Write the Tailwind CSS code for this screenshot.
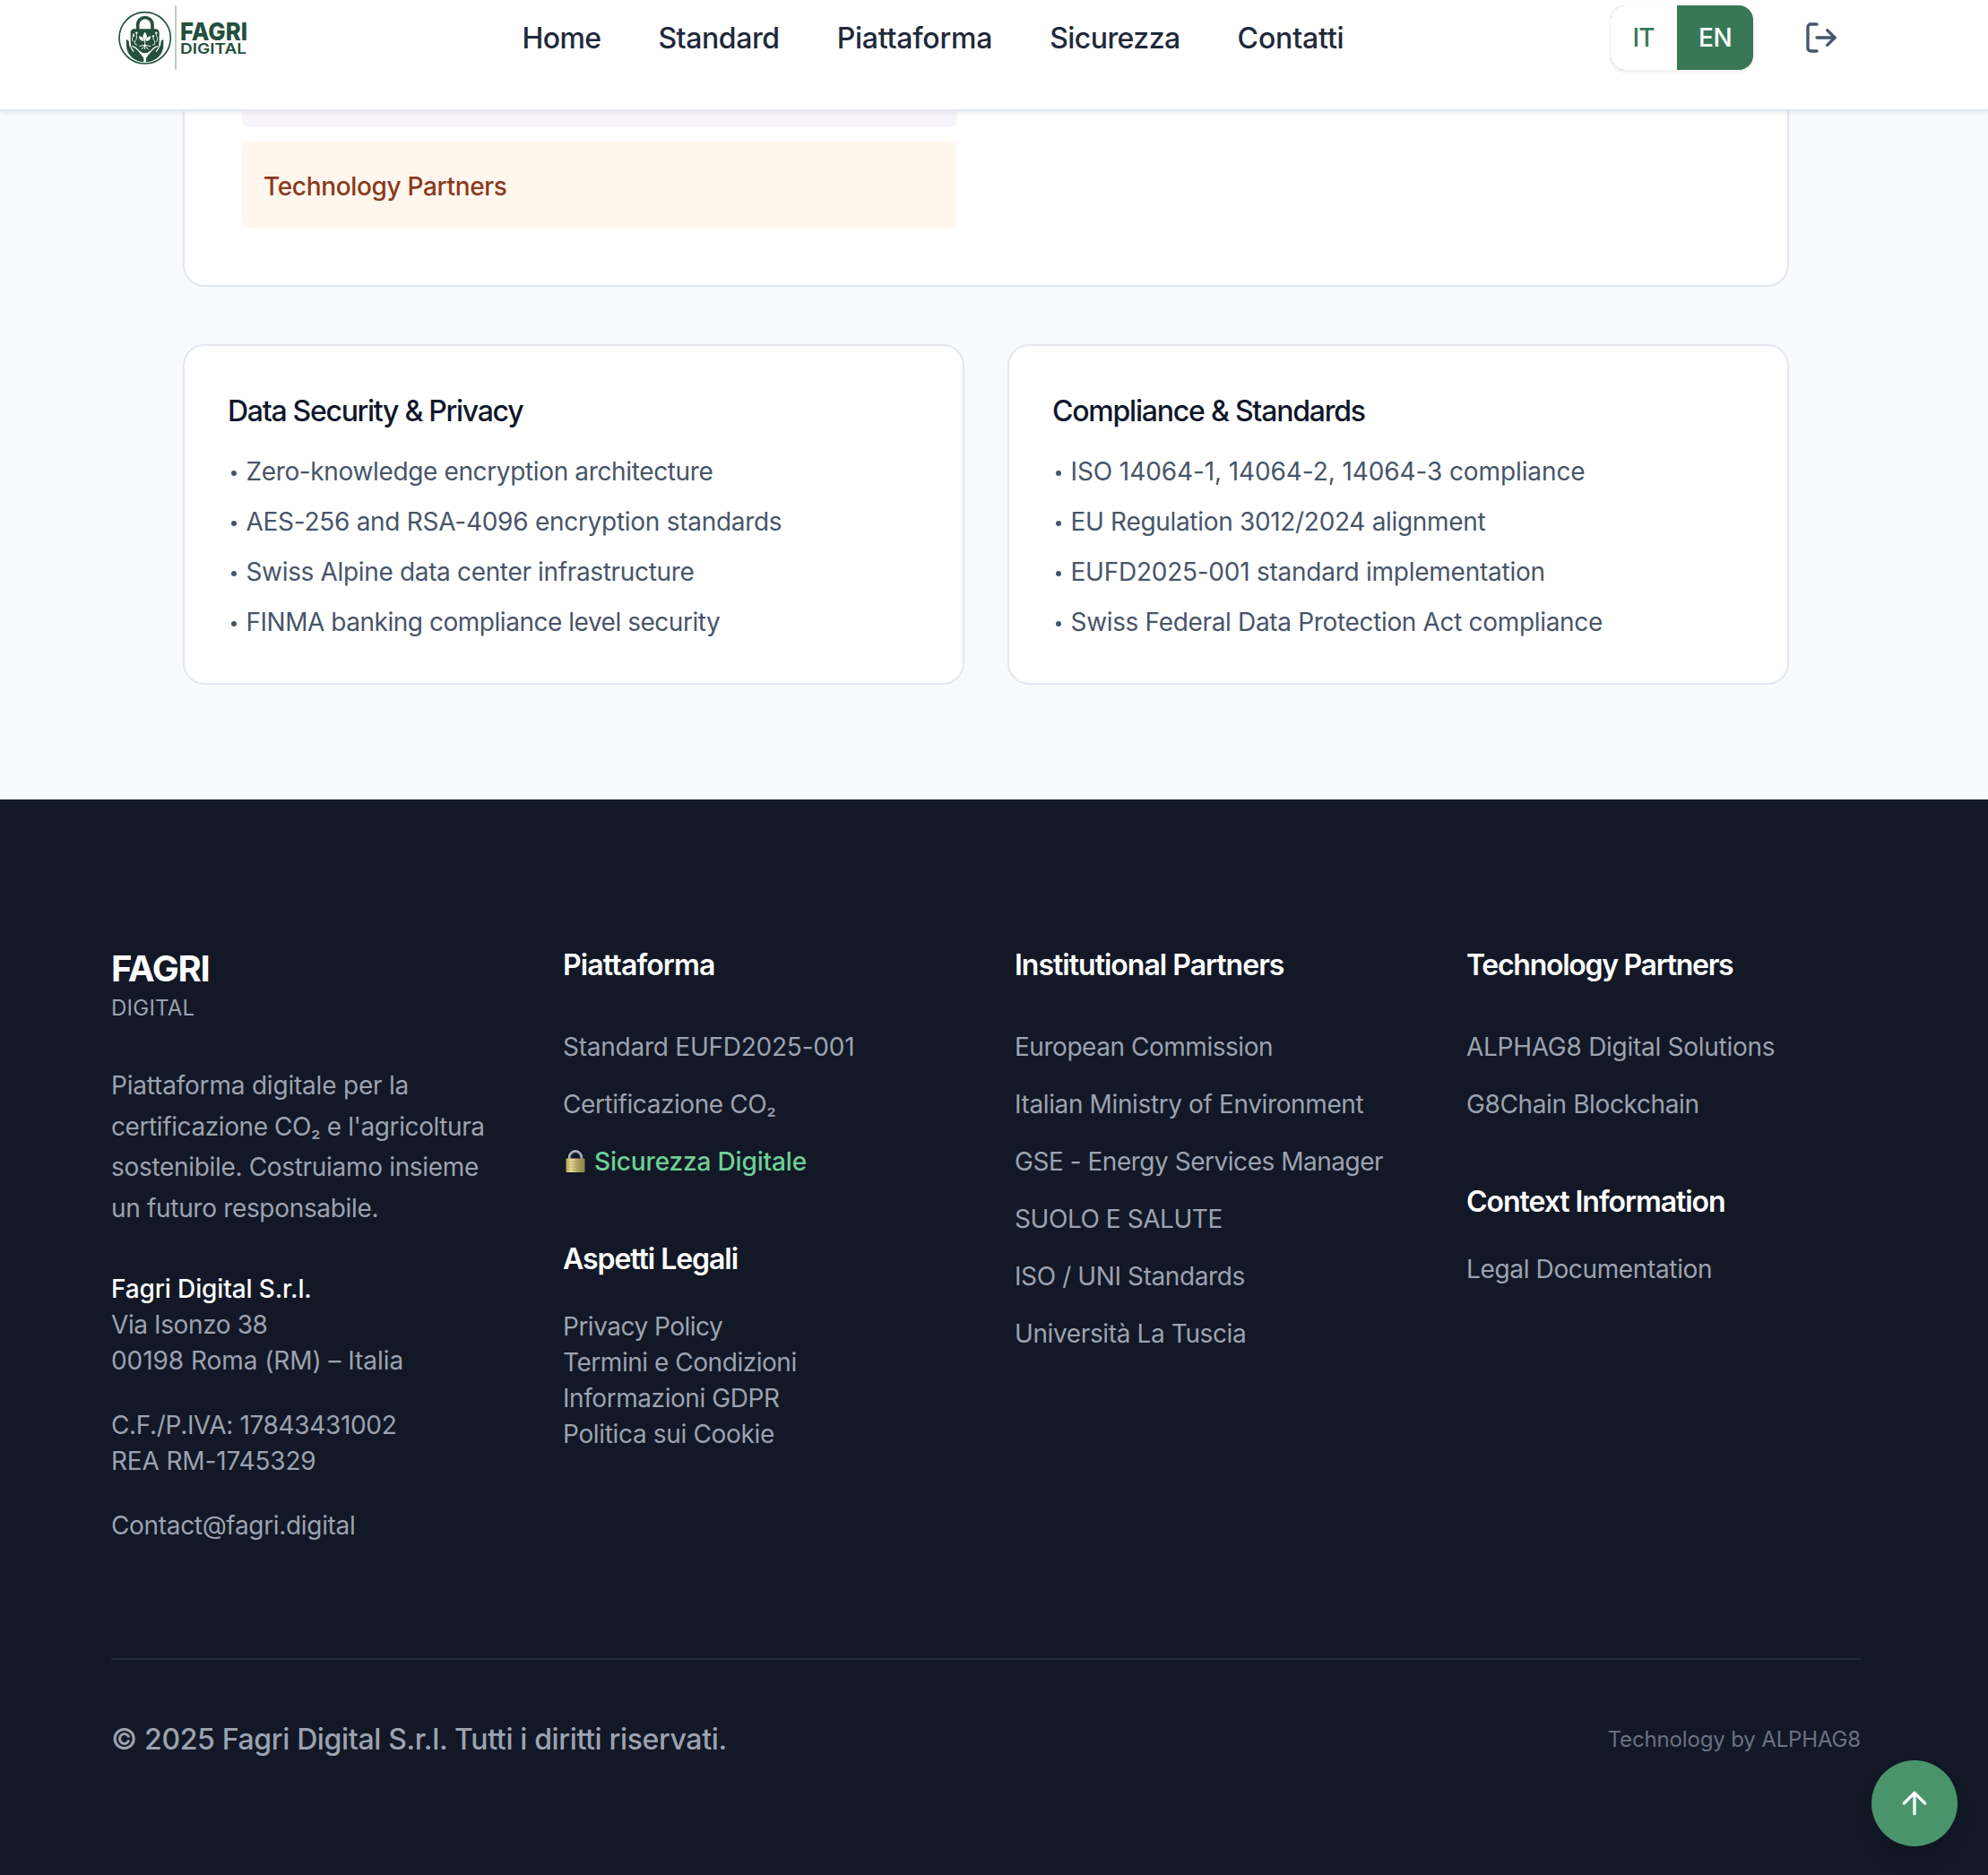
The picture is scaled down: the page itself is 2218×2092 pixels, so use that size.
<!DOCTYPE html>
<html lang="it">
<head>
<meta charset="utf-8">
<meta name="viewport" content="width=device-width, initial-scale=1">
<title>Fagri Digital</title>
<script src="https://cdn.jsdelivr.net/npm/@tailwindcss/browser@4"></script>
</head>
<body class="h-[2092px] overflow-hidden bg-[#f9fafc] font-['Inter',sans-serif] text-[28px] leading-10">
<div class="flex h-[2092px] flex-col">

  <!-- Header -->
  <header class="relative z-10 h-[124px] shrink-0 border-b-2 border-[#e2e7ef] bg-white pt-1.5 shadow-[0_2px_6px_rgba(0,0,0,0.08)]">
    <div class="flex h-[72px] items-center pl-[132px]">
      <a href="#" class="flex h-[72px] w-[146px] items-center">
        <svg class="size-[60px] shrink-0" viewBox="66 36 180 180" fill="none">
          <circle cx="155" cy="127" r="86" stroke="#24503c" stroke-width="5"/>
          <path d="M131 102V83a24.500 24.500 0 0 1 49 0v19" stroke="#24503c" stroke-width="11"/>
          <path d="M120 97h70q13 0 13 13v28q0 34-48 40q-48-6-48-40v-28q0-13 13-13z" fill="#24503c"/>
          <path d="M93 133q9 0 9 12l1 10l5-4q7-1 12 6l23 27q10 9 12 24q-24 1-44-16q-18-17-18-40zM217 133q-9 0-9 12l-1 10l-5-4q-7-1-12 6l-23 27q-10 9-12 24q24 1 44-16q18-17 18-40z" fill="#24503c"/>
          <path d="M106 152q3 12 12 21M204 152q-3 12-12 21M112 154q13 4 22 16q17 10 21 24M198 154q-13 4-22 16q-17 10-21 24" stroke="#fff" stroke-width="3.500"/>
          <path d="M155 185v22" stroke="#fff" stroke-width="8"/>
          <path d="M155 107q-13 14 0 29q13-15 0-29zM135 121q1 17 17 17q-1-16-17-17zM175 121q-1 17-17 17q1-16 17-17z" fill="#fff"/>
          <path d="M155 132v33M155 151q-8 1-19 4M155 151q8 1 19 4M155 153q-6 4-11 12M155 153q6 4 11 12" stroke="#fff" stroke-width="3"/>
          <path d="M117 111v9l-4 5v10l4 5M127 109v22l-5 5v12l8 3M193 111v9l4 5v10l-4 5M183 117v15l5 5v11l-8 3" stroke="#fff" stroke-width="2.500"/>
          <g fill="#fff"><circle cx="117" cy="119" r="3.500"/><circle cx="127" cy="110" r="3.500"/><circle cx="193" cy="110" r="3.500"/><circle cx="183" cy="121" r="3.500"/></g>
        </svg>
        <span class="ml-[3px] h-[72px] w-[2px] shrink-0 bg-[#bccec5]"></span>
        <svg class="ml-1 h-[72px] w-[77px] shrink-0 overflow-visible font-['Inter',sans-serif]" viewBox="0 0 77 72" fill="#24503c">
          <text x="0" y="38.700" font-size="27.500" font-weight="800" textLength="75" lengthAdjust="spacingAndGlyphs">FAGRI</text>
          <text x="0" y="53.800" font-size="16.500" font-weight="600" textLength="74" lengthAdjust="spacingAndGlyphs">DIGITAL</text>
        </svg>
      </a>
      <nav class="ml-[304.500px] flex shrink-0 gap-16 pt-0.5 text-[32px] leading-[48px] font-medium text-[#1e293b]">
        <a href="#" class="tracking-[-0.626px]">Home</a>
        <a href="#" class="tracking-[-0.423px]">Standard</a>
        <a href="#" class="tracking-[-0.220px]">Piattaforma</a>
        <a href="#" class="tracking-[-0.560px]">Sicurezza</a>
        <a href="#" class="tracking-[-0.165px]">Contatti</a>
      </nav>
      <div class="mr-[166px] ml-auto flex items-center">
        <div class="flex h-[72px] w-[159px] overflow-hidden rounded-2xl bg-[#387857] font-medium shadow-[0_2px_4px_rgba(0,0,0,0.08)]">
          <button class="w-[74px] bg-white pl-[24.500px] text-left tracking-[-0.900px] text-[#387857]">IT</button>
          <button class="w-[85px] pl-6 text-left tracking-[-0.385px] text-white">EN</button>
        </div>
        <svg class="ml-14 size-10" viewBox="0 0 24 24" fill="none" stroke="#475569" stroke-width="2" stroke-linecap="round" stroke-linejoin="round">
          <path d="M9 21H5a2 2 0 0 1-2-2V5a2 2 0 0 1 2-2h4"/><path d="m16 17 5-5-5-5"/><path d="M21 12H9"/>
        </svg>
      </div>
    </div>
  </header>

  <!-- Content -->
  <main class="flex h-[768px] shrink-0 flex-col gap-16 pr-[222px] pl-[204px]">
    <section class="h-[196px] rounded-b-3xl border-2 border-t-0 border-[#e2e7ef] bg-white px-16">
      <div class="h-[18px] w-[798px] rounded-b-lg bg-[#f7f4fe]"></div>
      <div class="mt-4 flex h-24 w-[798px] items-center rounded-lg bg-[#fff7ed] pt-1 pl-6 font-medium tracking-[-0.338px] text-[#8a3a1c]">Technology Partners</div>
    </section>
    <div class="grid grid-cols-2 gap-12">
      <section class="h-[380px] rounded-3xl border-2 border-[#e2e7ef] bg-white p-12">
        <h3 class="text-[32px] leading-[50px] font-medium tracking-[-1.290px] text-[#0f172a]">Data Security &amp; Privacy</h3>
        <ul class="mt-[22px] flex flex-col gap-4 whitespace-nowrap text-[#475569]">
          <li class="flex items-center"><span class="mt-1 mr-[11px] ml-[3.500px] size-1.5 rounded-full bg-[#475569]"></span><span class="tracking-[-0.362px]">Zero-knowledge encryption architecture</span></li>
          <li class="flex items-center"><span class="mt-1 mr-[11px] ml-[3.500px] size-1.5 rounded-full bg-[#475569]"></span><span class="tracking-[-0.280px]">AES-256 and RSA-4096 encryption standards</span></li>
          <li class="flex items-center"><span class="mt-1 mr-[11px] ml-[3.500px] size-1.5 rounded-full bg-[#475569]"></span><span class="tracking-[-0.340px]">Swiss Alpine data center infrastructure</span></li>
          <li class="flex items-center"><span class="mt-1 mr-[11px] ml-[3.500px] size-1.5 rounded-full bg-[#475569]"></span><span class="tracking-[-0.471px]">FINMA banking compliance level security</span></li>
        </ul>
      </section>
      <section class="h-[380px] rounded-3xl border-2 border-[#e2e7ef] bg-white p-12">
        <h3 class="text-[32px] leading-[50px] font-medium tracking-[-1.220px] text-[#0f172a]">Compliance &amp; Standards</h3>
        <ul class="mt-[22px] flex flex-col gap-4 whitespace-nowrap text-[#475569]">
          <li class="flex items-center"><span class="mt-1 mr-[11px] ml-[3.500px] size-1.5 rounded-full bg-[#475569]"></span><span class="tracking-[-0.100px]">ISO 14064-1, 14064-2, 14064-3 compliance</span></li>
          <li class="flex items-center"><span class="mt-1 mr-[11px] ml-[3.500px] size-1.5 rounded-full bg-[#475569]"></span><span class="tracking-[-0.316px]">EU Regulation 3012/2024 alignment</span></li>
          <li class="flex items-center"><span class="mt-1 mr-[11px] ml-[3.500px] size-1.5 rounded-full bg-[#475569]"></span><span class="tracking-[-0.250px]">EUFD2025-001 standard implementation</span></li>
          <li class="flex items-center"><span class="mt-1 mr-[11px] ml-[3.500px] size-1.5 rounded-full bg-[#475569]"></span><span class="tracking-[-0.335px]">Swiss Federal Data Protection Act compliance</span></li>
        </ul>
      </section>
    </div>
  </main>

  <!-- Footer -->
  <footer class="h-[1200px] shrink-0 bg-[#121826] pt-40 pr-[142px] pl-[124px] text-[#9ca3af]">
    <div class="grid h-[670px] grid-cols-4 gap-16 whitespace-nowrap">
      <div>
        <div class="pt-px text-[40px] leading-[56px] font-bold tracking-[-1.179px] text-white">FAGRI</div>
        <div class="text-2xl leading-8 tracking-[0.245px]">DIGITAL</div>
        <p class="mt-12 leading-[45.500px]">
          <span class="block tracking-[-0.202px]">Piattaforma digitale per la</span>
          <span class="block tracking-[-0.407px]">certificazione CO<span class="text-2xl leading-none">₂</span> e l'agricoltura</span>
          <span class="block tracking-[-0.319px]">sostenibile. Costruiamo insieme</span>
          <span class="block tracking-[-0.320px]">un futuro responsabile.</span>
        </p>
        <div class="mt-[47px] font-medium tracking-[-0.131px] text-white">Fagri Digital S.r.l.</div>
        <div class="tracking-[-0.400px]">Via Isonzo 38</div>
        <div class="tracking-[-0.060px]">00198 Roma (RM) – Italia</div>
        <div class="mt-8 tracking-[-0.336px]">C.F./P.IVA: 17843431002</div>
        <div class="tracking-[-0.150px]">REA RM-1745329</div>
        <a href="#" class="mt-8 block tracking-[-0.330px]">Contact@fagri.digital</a>
      </div>

      <div>
        <h4 class="text-[32px] leading-[50px] font-semibold tracking-[-0.850px] text-white">Piattaforma</h4>
        <ul class="mt-[46px] flex flex-col gap-6">
          <li class="tracking-[-0.240px]">Standard EUFD2025-001</li>
          <li class="h-10 tracking-[-0.430px]">Certificazione CO<span class="text-2xl leading-none">₂</span></li>
          <li class="flex items-center font-medium tracking-[-0.160px] text-[#6fcf97]">
            <svg class="mr-[10px] ml-[3px] h-[26px] w-[22px]" viewBox="0 0 22 26" fill="none">
              <defs>
                <linearGradient id="brass" x1="0" x2="1" y1="0" y2="0"><stop offset="0" stop-color="#b3a25c"/><stop offset=".25" stop-color="#e6dd94"/><stop offset=".6" stop-color="#b3a562"/><stop offset="1" stop-color="#8f8148"/></linearGradient>
              </defs>
              <path d="M4.200 11V8.500a6.800 6.800 0 0 1 13.600 0V11" stroke="#8f97a5" stroke-width="2.800"/>
              <path d="M3.600 11V8.300a7.400 7.400 0 0 1 14.800 0" stroke="#c9d0dc" stroke-width="1"/>
              <rect x="0.500" y="9.500" width="21" height="15.500" rx="1" fill="url(#brass)"/>
              <path d="M1 13h20M1 16h20M1 19h20M1 22h20" stroke="#8d7f45" stroke-opacity=".3" stroke-width="1"/>
            </svg>
            <span>Sicurezza Digitale</span>
          </li>
        </ul>
        <h4 class="mt-16 text-[32px] leading-[50px] font-semibold tracking-[-1.050px] text-white">Aspetti Legali</h4>
        <ul class="mt-[30px]">
          <li class="tracking-[-0.505px]">Privacy Policy</li>
          <li class="tracking-[-0.460px]">Termini e Condizioni</li>
          <li class="tracking-[-0.430px]">Informazioni GDPR</li>
          <li class="tracking-[-0.337px]">Politica sui Cookie</li>
        </ul>
      </div>

      <div>
        <h4 class="text-[32px] leading-[50px] font-semibold tracking-[-0.990px] text-white">Institutional Partners</h4>
        <ul class="mt-[46px] flex flex-col gap-6">
          <li class="tracking-[-0.463px]">European Commission</li>
          <li class="tracking-[-0.380px]">Italian Ministry of Environment</li>
          <li class="tracking-[-0.475px]">GSE - Energy Services Manager</li>
          <li class="tracking-[-0.444px]">SUOLO E SALUTE</li>
          <li class="tracking-[-0.400px]">ISO / UNI Standards</li>
          <li class="tracking-[-0.380px]">Università La Tuscia</li>
        </ul>
      </div>

      <div>
        <h4 class="text-[32px] leading-[50px] font-semibold tracking-[-1.280px] text-white">Technology Partners</h4>
        <ul class="mt-[46px] flex flex-col gap-6">
          <li class="tracking-[-0.270px]">ALPHAG8 Digital Solutions</li>
          <li class="tracking-[-0.372px]">G8Chain Blockchain</li>
        </ul>
        <h4 class="mt-16 text-[32px] leading-[50px] font-semibold tracking-[-1.050px] text-white">Context Information</h4>
        <ul class="mt-[30px]">
          <li class="tracking-[-0.356px]">Legal Documentation</li>
        </ul>
      </div>
    </div>

    <div class="mt-32 flex items-center justify-between border-t-2 border-[#242b38] pt-[65px]">
      <p class="text-[32px] leading-[48px] font-medium tracking-[-0.353px]">© 2025 Fagri Digital S.r.l. Tutti i diritti riservati.</p>
      <p class="text-2xl tracking-[-0.150px] text-[#6b7280]">Technology by ALPHAG8</p>
    </div>
  </footer>
</div>

<!-- Back to top -->
<button class="fixed right-[34px] bottom-8 z-20 flex size-24 items-center justify-center rounded-full bg-[#4a946c] shadow-[0_16px_24px_-4px_rgba(0,0,0,0.15)]">
  <svg class="size-10" viewBox="0 0 24 24" fill="none" stroke="#fff" stroke-width="2" stroke-linecap="round" stroke-linejoin="round"><path d="m5 12 7-7 7 7"/><path d="M12 19V5"/></svg>
</button>
</body>
</html>
